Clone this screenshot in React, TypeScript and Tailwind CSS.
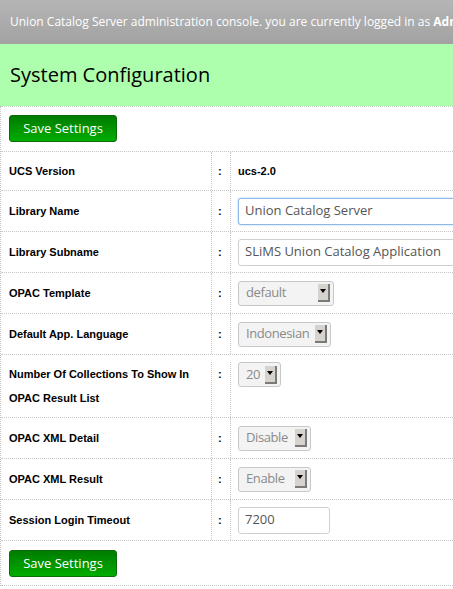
import React from 'react';

const SANS = "font-['Open_Sans','Noto_Sans',sans-serif]";
const LABEL = "font-['Liberation_Sans',Arial,sans-serif] font-bold text-[11px]";

function SaveButton() {
  return (
    <button className="h-[27px] w-[108px] rounded-[3px] border border-[#0a6b0a] bg-gradient-to-b from-[#007c00] to-[#00ad00] text-[13px] text-white">
      Save Settings
    </button>
  );
}

function FakeSelect({ value, width }: { value: string; width: number }) {
  return (
    <div
      className="flex h-[25px] items-center justify-between rounded-[3px] border border-[#c8c8c8] bg-[#f3f3f3] pl-[7px] pr-[3px]"
      style={{ width }}
    >
      <span className="text-[13px] tracking-[-0.4px] text-[#8a8a8a]">{value}</span>
      <span className="flex h-[18px] w-[12px] shrink-0 items-start justify-center border-b-2 border-r-2 border-[#7a7a7a] bg-[#d6d3ce] pt-[5px]">
        <span className="h-0 w-0 border-x-[3px] border-t-[4px] border-x-transparent border-t-black" />
      </span>
    </div>
  );
}

function TextInput({ value, width, focused }: { value: string; width?: number; focused?: boolean }) {
  return (
    <div
      className={
        'flex h-[27px] items-center rounded-[3px] border bg-white pl-[6px] text-[13px] text-[#555] ' +
        (focused ? 'border-[#8fb8e8] shadow-[0_0_2px_#9cc4f0]' : 'border-[#cfcfcf]')
      }
      style={{ width: width ?? 260 }}
    >
      {value}
    </div>
  );
}

type Row = { label: React.ReactNode; value: React.ReactNode; h: string; tall?: boolean };

const rows: Row[] = [
  { label: 'UCS Version', h: 'h-[39px]', value: <span className={LABEL}>ucs-2.0</span> },
  { label: 'Library Name', h: 'h-[41px]', value: <TextInput value="Union Catalog Server" focused /> },
  { label: 'Library Subname', h: 'h-[41px]', value: <TextInput value="SLiMS Union Catalog Application" /> },
  { label: 'OPAC Template', h: 'h-[41px]', value: <FakeSelect value="default" width={96} /> },
  { label: 'Default App. Language', h: 'h-[41px]', value: <FakeSelect value="Indonesian" width={93} /> },
  {
    label: (
      <>
        Number Of Collections To Show In
        <br />
        OPAC Result List
      </>
    ),
    h: 'h-[63px]',
    tall: true,
    value: <FakeSelect value="20" width={43} />,
  },
  { label: 'OPAC XML Detail', h: 'h-[41px]', value: <FakeSelect value="Disable" width={73} /> },
  { label: 'OPAC XML Result', h: 'h-[41px]', value: <FakeSelect value="Enable" width={73} /> },
  { label: 'Session Login Timeout', h: 'h-[41px]', value: <TextInput value="7200" width={92} /> },
];

export default function App() {
  return (
    <div className={`h-[589px] w-[453px] overflow-hidden bg-white ${SANS}`}>
      <div className="flex h-[44px] items-center whitespace-nowrap bg-gradient-to-b from-[#b5b5b5] to-[#a2a2a2] pl-[10px] text-[12px] text-white">
        Union Catalog Server administration console. you are currently logged in as&nbsp;<b>Admin</b>
      </div>
      <div className="flex h-[62px] items-center bg-[#adfead] pl-[10px]">
        <h1 className="text-[20px] text-black">System Configuration</h1>
      </div>
      <div className="border-l border-dotted border-[#c6c6c6]">
        <div className="h-[45px] border-t border-dotted border-[#c6c6c6] pl-[8px] pt-[8px]">
          <SaveButton />
        </div>
        {rows.map((r, i) => {
          const align = r.tall ? 'items-start' : 'items-center';
          return (
            <div
              key={i}
              className={`flex ${r.h} ${r.tall ? 'pt-[7px]' : ''} border-t border-dotted border-[#c6c6c6]`}
            >
              <div className={`flex w-[210px] shrink-0 pl-[8px] leading-[24px] text-black ${LABEL} ${align}`}>
                <div>{r.label}</div>
              </div>
              <div className={`flex w-[19px] shrink-0 border-l border-dotted border-[#c6c6c6] pl-[6px] leading-[24px] ${LABEL} ${align}`}>
                :
              </div>
              <div className={`flex flex-1 border-l border-dotted border-[#c6c6c6] pl-[7px] ${align}`}>
                {r.value}
              </div>
            </div>
          );
        })}
        <div className="h-[46px] border-y border-dotted border-[#c6c6c6] pl-[8px] pt-[9px]">
          <SaveButton />
        </div>
      </div>
    </div>
  );
}
